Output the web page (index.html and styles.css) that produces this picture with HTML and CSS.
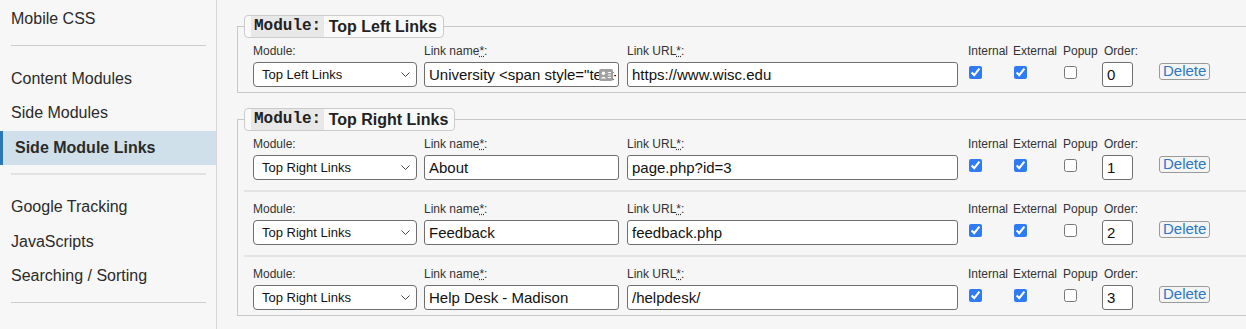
FILE: index.html
```html
<!DOCTYPE html>
<html lang="en">
<head>
    <meta charset="UTF-8">
    <meta name="viewport" content="width=device-width, initial-scale=1.0">
    <title>Side Module Links</title>
    <link rel="stylesheet" href="styles.css">
</head>
<body>
    <nav class="sidebar">
        <a href="#" class="nav-item">Mobile CSS</a>
        <div class="nav-sep"></div>
        <a href="#" class="nav-item">Content Modules</a>
        <a href="#" class="nav-item">Side Modules</a>
        <a href="#" class="nav-item active">Side Module Links</a>
        <div class="nav-sep nav-sep-light"></div>
        <a href="#" class="nav-item">Google Tracking</a>
        <a href="#" class="nav-item">JavaScripts</a>
        <a href="#" class="nav-item">Searching / Sorting</a>
        <div class="nav-sep"></div>
        <a href="#" class="nav-item nav-item-faint">Admin Users</a>
    </nav>

    <main class="main">
        <fieldset class="module">
            <legend><code>Module:</code> Top Left Links</legend>

            <div class="link-row">
                <div class="field">
                    <label>Module:</label>
                    <span class="select-wrap">
                        <select><option>Top Left Links</option><option>Top Right Links</option></select>
                        <svg width="9" height="5" viewBox="0 0 9 5"><path d="M0.5 0.5 L4.5 4.5 L8.5 0.5" fill="none" stroke="#444" stroke-width="1"/></svg>
                    </span>
                </div>
                <div class="field">
                    <label>Link name<abbr title="required">*</abbr>:</label>
                    <span class="input-wrap">
                        <input type="text" class="text-input name-input" value='University &lt;span style="text-transform:uppercase"&gt;Madison&lt;/span&gt;'>
                        <svg class="autofill" width="14" height="12" viewBox="0 0 14 12">
                            <rect x="0" y="0" width="14" height="12" rx="2" fill="#a0a0a0"/>
                            <circle cx="4.5" cy="4.2" r="1.7" fill="#fff"/>
                            <path d="M1.8 9.5 Q4.5 5.8 7.2 9.5 Z" fill="#fff"/>
                            <rect x="8.8" y="3" width="3.2" height="1" fill="#fff"/>
                            <rect x="8.8" y="5.5" width="3.2" height="1" fill="#fff"/>
                            <rect x="8.8" y="8" width="3.2" height="1" fill="#fff"/>
                        </svg>
                    </span>
                </div>
                <div class="field">
                    <label>Link URL<abbr title="required">*</abbr>:</label>
                    <input type="text" class="text-input url-input" value="https://www.wisc.edu">
                </div>
                <div class="field">
                    <label>Internal</label>
                    <input type="checkbox" checked>
                </div>
                <div class="field">
                    <label>External</label>
                    <input type="checkbox" checked>
                </div>
                <div class="field">
                    <label>Popup</label>
                    <input type="checkbox">
                </div>
                <div class="field">
                    <label class="order-label">Order:</label>
                    <input type="text" class="text-input order-input" value="0">
                </div>
                <div class="field field-action">
                    <button class="delete-btn">Delete</button>
                </div>
            </div>
        </fieldset>

        <fieldset class="module">
            <legend><code>Module:</code> Top Right Links</legend>

            <div class="link-row">
                <div class="field">
                    <label>Module:</label>
                    <span class="select-wrap">
                        <select><option>Top Right Links</option><option>Top Left Links</option></select>
                        <svg width="9" height="5" viewBox="0 0 9 5"><path d="M0.5 0.5 L4.5 4.5 L8.5 0.5" fill="none" stroke="#444" stroke-width="1"/></svg>
                    </span>
                </div>
                <div class="field">
                    <label>Link name<abbr title="required">*</abbr>:</label>
                    <input type="text" class="text-input name-input" value="About">
                </div>
                <div class="field">
                    <label>Link URL<abbr title="required">*</abbr>:</label>
                    <input type="text" class="text-input url-input" value="page.php?id=3">
                </div>
                <div class="field">
                    <label>Internal</label>
                    <input type="checkbox" checked>
                </div>
                <div class="field">
                    <label>External</label>
                    <input type="checkbox" checked>
                </div>
                <div class="field">
                    <label>Popup</label>
                    <input type="checkbox">
                </div>
                <div class="field">
                    <label class="order-label">Order:</label>
                    <input type="text" class="text-input order-input" value="1">
                </div>
                <div class="field field-action">
                    <button class="delete-btn">Delete</button>
                </div>
            </div>

            <div class="link-row">
                <div class="field">
                    <label>Module:</label>
                    <span class="select-wrap">
                        <select><option>Top Right Links</option><option>Top Left Links</option></select>
                        <svg width="9" height="5" viewBox="0 0 9 5"><path d="M0.5 0.5 L4.5 4.5 L8.5 0.5" fill="none" stroke="#444" stroke-width="1"/></svg>
                    </span>
                </div>
                <div class="field">
                    <label>Link name<abbr title="required">*</abbr>:</label>
                    <input type="text" class="text-input name-input" value="Feedback">
                </div>
                <div class="field">
                    <label>Link URL<abbr title="required">*</abbr>:</label>
                    <input type="text" class="text-input url-input" value="feedback.php">
                </div>
                <div class="field">
                    <label>Internal</label>
                    <input type="checkbox" checked>
                </div>
                <div class="field">
                    <label>External</label>
                    <input type="checkbox" checked>
                </div>
                <div class="field">
                    <label>Popup</label>
                    <input type="checkbox">
                </div>
                <div class="field">
                    <label class="order-label">Order:</label>
                    <input type="text" class="text-input order-input" value="2">
                </div>
                <div class="field field-action">
                    <button class="delete-btn">Delete</button>
                </div>
            </div>

            <div class="link-row">
                <div class="field">
                    <label>Module:</label>
                    <span class="select-wrap">
                        <select><option>Top Right Links</option><option>Top Left Links</option></select>
                        <svg width="9" height="5" viewBox="0 0 9 5"><path d="M0.5 0.5 L4.5 4.5 L8.5 0.5" fill="none" stroke="#444" stroke-width="1"/></svg>
                    </span>
                </div>
                <div class="field">
                    <label>Link name<abbr title="required">*</abbr>:</label>
                    <input type="text" class="text-input name-input" value="Help Desk - Madison">
                </div>
                <div class="field">
                    <label>Link URL<abbr title="required">*</abbr>:</label>
                    <input type="text" class="text-input url-input" value="/helpdesk/">
                </div>
                <div class="field">
                    <label>Internal</label>
                    <input type="checkbox" checked>
                </div>
                <div class="field">
                    <label>External</label>
                    <input type="checkbox" checked>
                </div>
                <div class="field">
                    <label>Popup</label>
                    <input type="checkbox">
                </div>
                <div class="field">
                    <label class="order-label">Order:</label>
                    <input type="text" class="text-input order-input" value="3">
                </div>
                <div class="field field-action">
                    <button class="delete-btn">Delete</button>
                </div>
            </div>
        </fieldset>
    </main>
</body>
</html>
```

FILE: styles.css
```css
html, body {
    margin: 0;
    height: 100%;
    overflow: hidden;
}
body {
    font-family: "Liberation Sans", Arial, Helvetica, sans-serif;
    background: #f6f6f6;
    color: #222;
    display: flex;
}

/* sidebar */
.sidebar {
    width: 216px;
    flex: none;
    background: #f7f7f7;
    border-right: 1px solid #d6d6d6;
    padding-top: 2px;
}
.nav-item {
    display: block;
    padding: 8px 11px;
    font-size: 16px;
    line-height: 18.5px;
    color: #2b2b2b;
    text-decoration: none;
}
.nav-item.active {
    background: #cfe0ea;
    border-left: 3px solid #2b77b3;
    padding-left: 12px;
    font-weight: bold;
}
.nav-item-faint {
    color: #999;
}
.nav-sep {
    border-top: 1px solid #cdcdcd;
    margin: 8px 10px 16px 11px;
}
.nav-sep-light {
    border-top: 2px solid #e2e2e2;
    margin: 8px 10px 15px 11px;
}

/* main */
.main {
    flex: 1;
    min-width: 0;
    padding: 15px 0 0 20px;
}
.module {
    border: 1px solid #c8c8c8;
    border-right: none;
    padding: 0 0 0 6px;
    margin: 0 0 15px 0;
    min-width: 0;
}
.module legend {
    padding: 0 6px;
    border: 1px solid #cbcbcb;
    border-radius: 4px;
    background: #f9f9f9;
    font-size: 16px;
    font-weight: bold;
    line-height: 21px;
    color: #222;
}
.module legend code {
    display: inline-block;
    vertical-align: top;
    font-family: "Liberation Mono", "Courier New", monospace;
    font-size: 16px;
    line-height: 21px;
    background: #e8e8e8;
    padding: 0 3px;
}

.link-row {
    display: grid;
    grid-template-columns: 171px 203px 341px 45px 50px 39px 57px auto;
    align-items: start;
    padding: 6px 0 5px 9px;
}
.link-row + .link-row {
    border-top: 2px solid #e4e4e4;
    margin-top: 5px;
    padding-top: 10px;
}
.field label {
    display: block;
    font-size: 12px;
    line-height: 14px;
    margin-bottom: 4px;
    color: #333;
    white-space: nowrap;
}
.field .order-label {
    margin-left: 2px;
}
.field-action {
    padding-top: 18px;
}

.text-input {
    box-sizing: border-box;
    height: 25px;
    border: 1px solid #6f6f6f;
    border-radius: 3px;
    padding: 0 4px;
    background: #fff;
    color: #111;
    font: 15px "Liberation Sans", Arial, sans-serif;
    margin: 0;
}
.name-input { width: 195px; }
.url-input { width: 331px; }
.order-input { width: 31px; }

.input-wrap {
    position: relative;
    display: inline-block;
}
.input-wrap .name-input {
    padding-right: 2px;
}
.autofill {
    position: absolute;
    right: 6px;
    top: 7px;
}

.select-wrap {
    position: relative;
    display: inline-block;
}
.select-wrap select {
    appearance: none;
    box-sizing: border-box;
    width: 164px;
    height: 25px;
    border: 1px solid #6f6f6f;
    border-radius: 4px;
    background: #fff;
    color: #111;
    font: 13px "Liberation Sans", Arial, sans-serif;
    padding: 0 20px 0 8px;
    margin: 0;
}
.select-wrap svg {
    position: absolute;
    right: 7px;
    top: 10px;
    pointer-events: none;
}

input[type="checkbox"] {
    width: 13px;
    height: 13px;
    margin: 4px 0 0 1px;
    accent-color: #2f7bf5;
}

.delete-btn {
    height: 17px;
    padding: 0 3px;
    border: 1px solid #9a9a9a;
    border-radius: 3px;
    background: #f4f4f4;
    color: #2b78c4;
    font: 15px "Liberation Sans", Arial, sans-serif;
    line-height: 14px;
    margin: 0;
}
```
